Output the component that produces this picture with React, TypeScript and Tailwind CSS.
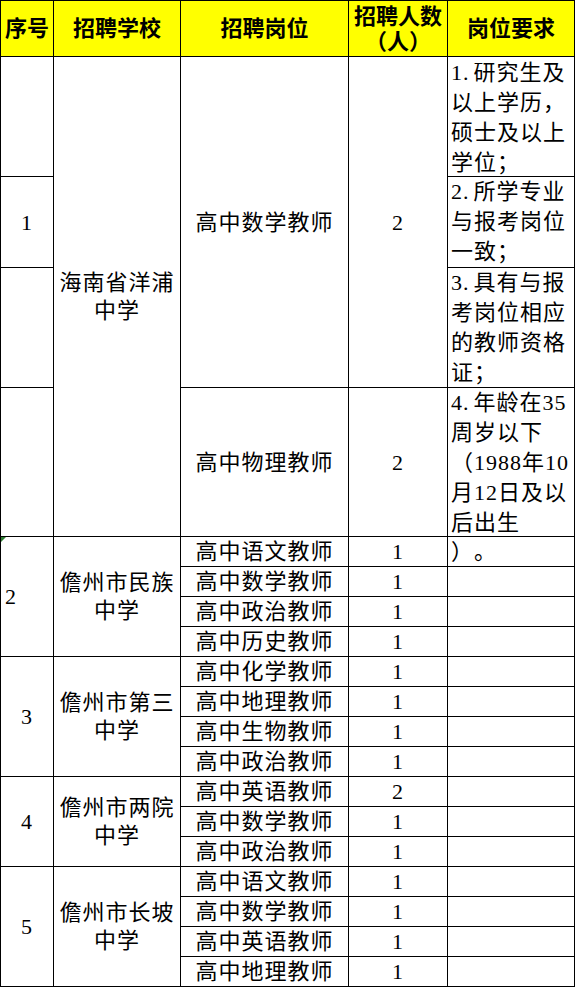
import React from "react";

type Group = {
  seq: string;
  seqLeft?: boolean;
  school: [string, string];
  jobs: [string, string][];
};

const groups: Group[] = [
  {
    seq: "2",
    seqLeft: true,
    school: ["儋州市民族", "中学"],
    jobs: [
      ["高中语文教师", "1"],
      ["高中数学教师", "1"],
      ["高中政治教师", "1"],
      ["高中历史教师", "1"],
    ],
  },
  {
    seq: "3",
    school: ["儋州市第三", "中学"],
    jobs: [
      ["高中化学教师", "1"],
      ["高中地理教师", "1"],
      ["高中生物教师", "1"],
      ["高中政治教师", "1"],
    ],
  },
  {
    seq: "4",
    school: ["儋州市两院", "中学"],
    jobs: [
      ["高中英语教师", "2"],
      ["高中数学教师", "1"],
      ["高中政治教师", "1"],
    ],
  },
  {
    seq: "5",
    school: ["儋州市长坡", "中学"],
    jobs: [
      ["高中语文教师", "1"],
      ["高中数学教师", "1"],
      ["高中英语教师", "1"],
      ["高中地理教师", "1"],
    ],
  },
];

const cell = "bg-white flex items-center justify-center text-center";
const req = "bg-white pl-[3px] leading-[30px] overflow-hidden text-left";

// first line of a numbered point: "1." gets a little room like the sheet's font
function Lines({ num, lines }: { num?: string; lines: string[] }) {
  return (
    <>
      {lines.map((l, i) => (
        <div key={i} className="whitespace-nowrap">
          {i === 0 && num && <span className="pr-[4px]">{num}</span>}
          {l}
        </div>
      ))}
    </>
  );
}

export default function App() {
  return (
    <div className="w-[575px] h-[987px] bg-white [font-family:'Liberation_Serif','Noto_Sans_CJK_SC',serif] [text-spacing-trim:space-all] text-black">
      <div className="grid grid-cols-[52px_126px_167px_98px_126px] grid-rows-[55px_119px_90px_119px_148px_repeat(15,29px)] gap-px bg-black p-px text-[22px] tracking-[1px]">
        {/* header */}
        <div className="bg-[#ffff00] flex items-center justify-center font-bold tracking-normal">序号</div>
        <div className="bg-[#ffff00] flex items-center justify-center font-bold tracking-normal">招聘学校</div>
        <div className="bg-[#ffff00] flex items-center justify-center font-bold tracking-normal">招聘岗位</div>
        <div className="bg-[#ffff00] flex flex-col items-center justify-center font-bold tracking-normal leading-[25px]">
          <div>招聘人数</div>
          <div>（人）</div>
        </div>
        <div className="bg-[#ffff00] flex items-center justify-center font-bold tracking-normal">岗位要求</div>

        {/* group 1 */}
        <div className="bg-white" />
        <div className={`${cell} row-span-4 flex-col leading-[28px]`}>
          <div>海南省洋浦</div>
          <div>中学</div>
        </div>
        <div className={`${cell} row-span-3`}>高中数学教师</div>
        <div className={`${cell} row-span-3`}>2</div>
        <div className={`${req} pt-[1px]`}>
          <Lines num="1." lines={["研究生及", "以上学历，", "硕士及以上", "学位；"]} />
        </div>

        <div className={cell}>1</div>
        <div className={req}>
          <Lines num="2." lines={["所学专业", "与报考岗位", "一致；"]} />
        </div>

        <div className="bg-white" />
        <div className={req}>
          <Lines num="3." lines={["具有与报", "考岗位相应", "的教师资格", "证；"]} />
        </div>

        <div className="bg-white" />
        <div className={cell}>高中物理教师</div>
        <div className={cell}>2</div>
        <div className={`${req} leading-[29.6px]`}>
          <Lines num="4." lines={["年龄在35", "周岁以下", "（1988年10", "月12日及以", "后出生"]} />
        </div>

        {/* other schools */}
        {groups.map((g, gi) => (
          <React.Fragment key={gi}>
            {g.jobs.map(([job, n], ji) => (
              <React.Fragment key={ji}>
                {ji === 0 && (
                  <>
                    <div
                      className={`bg-white flex items-center relative ${
                        g.jobs.length === 4 ? "row-span-4" : "row-span-3"
                      } ${g.seqLeft ? "justify-start pl-[4px]" : "justify-center"}`}
                    >
                      {g.seqLeft && (
                        <span className="absolute top-0 left-0 w-0 h-0 border-t-[5px] border-t-[#2e7d32] border-r-[5px] border-r-transparent" />
                      )}
                      {g.seq}
                    </div>
                    <div
                      className={`${cell} flex-col leading-[28px] ${
                        g.jobs.length === 4 ? "row-span-4" : "row-span-3"
                      }`}
                    >
                      <div>{g.school[0]}</div>
                      <div>{g.school[1]}</div>
                    </div>
                  </>
                )}
                <div className={`${cell} leading-none`}>{job}</div>
                <div className={`${cell} leading-none`}>{n}</div>
                <div className={`${req} leading-[29px]`}>{gi === 0 && ji === 0 ? "）。" : ""}</div>
              </React.Fragment>
            ))}
          </React.Fragment>
        ))}
      </div>
    </div>
  );
}
